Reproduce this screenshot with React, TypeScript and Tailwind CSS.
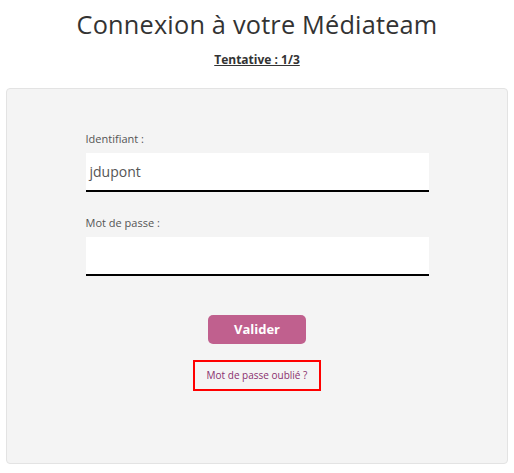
const App = () => {
  return (
    <div className="bg-white min-h-[473px] px-[6px] pt-[8px] pb-[8px] font-['Open_Sans',sans-serif]">
      <h1 className="text-center text-[25.3px] leading-[32px] text-[#333333] tracking-[0.2px]">
        Connexion à votre Médiateam
      </h1>
      <p className="mt-[12px] text-center text-[12px] leading-[16px] font-bold text-[#333333] underline">
        Tentative : 1/3
      </p>
      <div className="mt-[20px] h-[376px] rounded-[4px] border border-[#e3e3e3] bg-[#f4f4f4] pt-[42px]">
        <div className="mx-auto w-[343px]">
          <label className="block text-[11px] leading-[16px] text-[#555555]">Identifiant :</label>
          <div className="mt-[6px] h-[39px] bg-white border-b-2 border-black px-[4px] flex items-center text-[14px] text-[#555555]">
            jdupont
          </div>
          <label className="mt-[23px] block text-[11px] leading-[16px] text-[#555555]">Mot de passe :</label>
          <div className="mt-[6px] h-[39px] bg-white border-b-2 border-black" />
        </div>
        <div className="mt-[39px] flex flex-col items-center">
          <button className="h-[29px] w-[98px] rounded-[5px] bg-[#c0608e] text-[13px] font-bold text-white">
            Valider
          </button>
          <div className="mt-[16px] h-[31px] w-[128px] border-2 border-[#ff0000] flex items-center justify-center text-[10px] text-[#8a2f6e]">
            Mot de passe oublié ?
          </div>
        </div>
      </div>
    </div>
  );
};

export default App;
